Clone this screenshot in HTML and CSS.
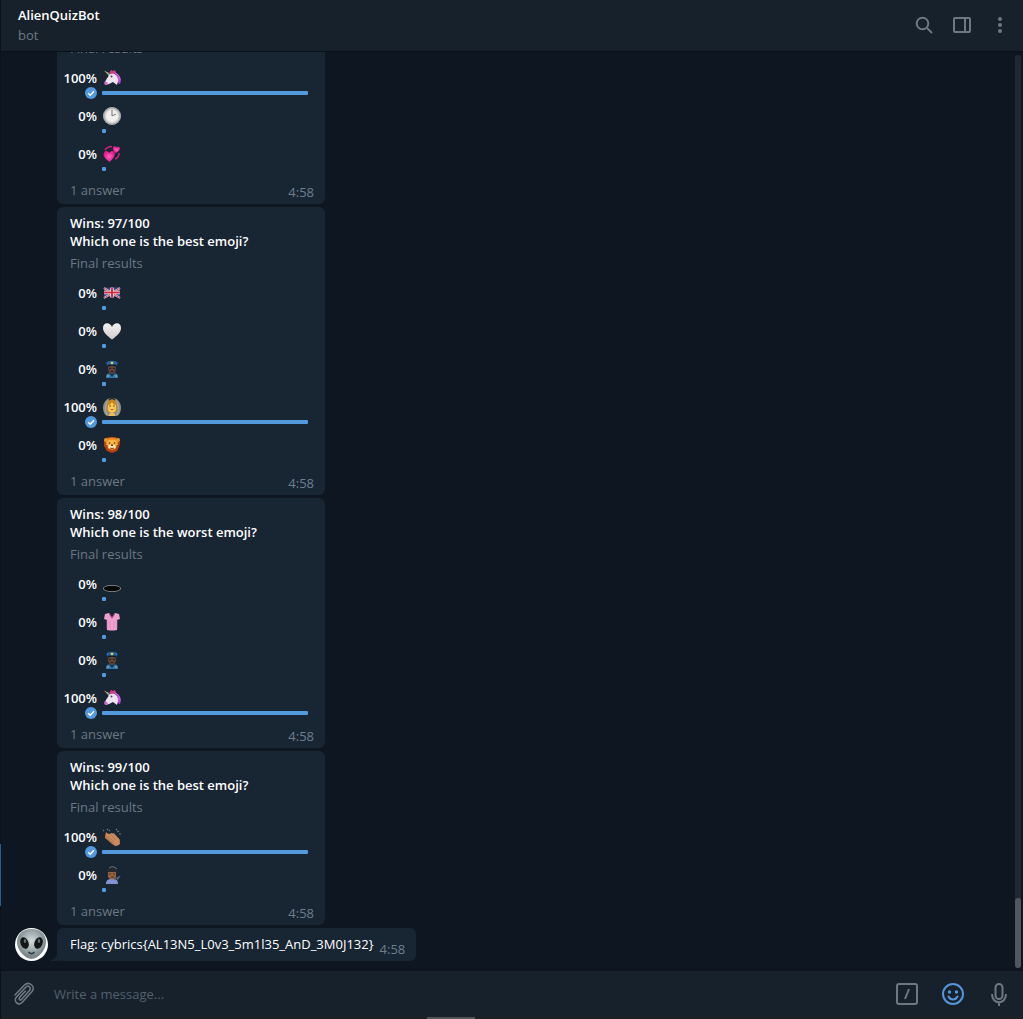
FILE: index.html
```html
<!DOCTYPE html>
<html lang="en">
<head>
<meta charset="utf-8">
<meta name="viewport" content="width=device-width, initial-scale=1">
<title>AlienQuizBot</title>
<link rel="stylesheet" href="styles.css">
</head>
<body>
<svg class="sprite" aria-hidden="true">
  <defs>
    <radialGradient id="silver"><stop offset=".6" stop-color="#f3f1ee"/><stop offset="1" stop-color="#9b9a98"/></radialGradient>
    <linearGradient id="pearl" x2="0" y2="1"><stop offset="0" stop-color="#f4f2f0"/><stop offset="1" stop-color="#cfcdcb"/></linearGradient>
    <radialGradient id="pink"><stop offset="0" stop-color="#ff62bd"/><stop offset="1" stop-color="#e31889"/></radialGradient>
    <radialGradient id="skin" cy=".4"><stop offset="0" stop-color="#d3dadb"/><stop offset=".6" stop-color="#a0adb0"/><stop offset="1" stop-color="#7b878a"/></radialGradient>
  </defs>
  <symbol id="unicorn" viewBox="0 0 18 18">
    <path d="M6 4 8 2l2 1 2-1 1 2c3 1 5 4 5 8l-1 3-3-1-2-4-5-5z" fill="#a63fc4"/>
    <path d="M7 3 8 1l2 1 2-1 1 3-3 1-3 1z" fill="#d03f86"/>
    <path d="M1 1.500 6 4l1 2-1 1z" fill="#b9b558"/><path d="m4 3 3 3-1 1z" fill="#58a9a5"/>
    <path d="M6 6c4-3 9 0 9 5 0 2-1 4-1 5l-4-3-4 2c-2 1-4 0-4-1 0-3 3-5 4-8z" fill="#eee5ef"/>
    <path d="m2 12 3 2-1 2H2l-1-2z" fill="#ca68ce"/><circle cx="8.500" cy="7.500" r="1" fill="#544256"/>
    <path d="M14 7c2 2 2 4 2 6M12 4c3 1 5 4 5 7" fill="none" stroke="#d87cdd" stroke-width=".8"/>
  </symbol>
  <symbol id="clock" viewBox="0 0 18 18"><circle cx="9" cy="9" r="9" fill="url(#silver)"/><circle cx="9" cy="9" r="8.400" fill="none" stroke="#aaa" stroke-width=".7"/><path d="M9 3v6l4-2" fill="none" stroke="#77736f"/></symbol>
  <symbol id="hearts" viewBox="0 0 18 18">
    <path d="M6.500 17C1 13 0 10 1 8c1-3 4-2 5.500 0 1.500-3 5-2 5.500 0 0 3-2 6-5.500 9z" fill="url(#pink)"/>
    <path d="M13 8C10 6 9.500 4 10 2.500c1-2 3-1 3.500 0 .5-1 3-1.500 3.500.5 0 2-1.500 3.500-4 5z" fill="url(#pink)"/>
    <path d="M2 5c2-3 4-3.500 7-3.500M16 8c0 3-1 5-4 6" fill="none" stroke="#d3217f" stroke-width="1.500"/>
  </symbol>
  <symbol id="flag" viewBox="0 0 18 18"><path d="M1 4c4-2 5 1 8 0 3 0 5-2 8 0v9c-4-1-5 1-8 0-3 0-5-1-8 1z" fill="#374486"/><path d="m1 4 16 10M17 4 1 14" stroke="#e9e3e6" stroke-width="2"/><path d="m1 4 16 10M17 4 1 14" stroke="#cd4354"/><path d="M9 3.500v10M1 8.500h16" stroke="#efe7e8" stroke-width="3.500"/><path d="M9 3.500v10M1 8.500h16" stroke="#cf304b" stroke-width="2"/></symbol>
  <symbol id="heart" viewBox="0 0 18 18"><path d="M9 17.500C3 13 0 10 0 6c0-6 7-6 9-1 2-5 9-5 9 1 0 4-3 7-9 11.500z" fill="url(#pearl)"/></symbol>
  <symbol id="police" viewBox="0 0 18 18">
    <path d="M3 18v-2c1-3 3-3 6-3s5 0 6 3v2z" fill="#2f78b5"/><path d="m6 13 3 4 3-4" fill="#15314d"/><path d="M5 5h8v4c0 3-2 5-4 5s-4-2-4-5z" fill="#5e4137"/>
    <path d="M3 3c2-3 10-3 12 0l-2 3H5z" fill="#2467a6"/><path d="M5 4.500h8v2c-3-1-5-1-8 0z" fill="#111b26"/><circle cx="9" cy="3" r="1.300" fill="#f3cb42"/><path d="M6 8.500h2m2 0h2M7.500 11.500h3" stroke="#201818" stroke-width=".8"/><path d="M4 16h2m6 0h2" stroke="#dfb940"/>
  </symbol>
  <symbol id="bride" viewBox="0 0 18 18">
    <path d="M9 0C3 0 0 5 0 10c0 4 2 7 4 8h10c2-1 4-4 4-8 0-5-3-10-9-10z" fill="#8e8f8d"/><path d="M5 3C2 7 2 13 4 17M13 3c3 4 3 10 1 14" stroke="#b1b1ad" fill="none"/>
    <path d="M4 8c0-9 10-9 10 0v6H4z" fill="#c88719"/><path d="M5 7c2 0 3-2 4-3 1 2 2 3 4 3v4c0 5-8 5-8 0z" fill="#f7c951"/><path d="M6 17c0-3 6-3 6 0v1H6z" fill="#efc057"/><path d="M6 2c2-2 4-2 6 0" stroke="#332d1b" stroke-width="1.500" fill="none"/><path d="M6 8h2m2 0h2" stroke="#70461c" stroke-width=".8"/><path d="M7 11q2 2 4 0" fill="#bc4c32"/>
  </symbol>
  <symbol id="lion" viewBox="0 0 18 18">
    <path d="m1 5 2-3 4-1 5 0 4 2 1 4-1 4-2 4-5 2-5-2-3-5z" fill="#b84312"/><path d="M3 4c2-3 10-3 12 0v5H3z" fill="#ed8e21"/><circle cx="3" cy="4" r="2" fill="#e89631"/><circle cx="15" cy="4" r="2" fill="#e89631"/>
    <path d="M4 6c2-3 8-3 10 0l-1 6c-2 2-6 2-8 0z" fill="#f9b842"/><ellipse cx="9" cy="10.500" rx="3.500" ry="2" fill="#ffebb8"/><path d="M8 9h2l-1 1z" stroke="#653015" fill="#653015"/><circle cx="6.500" cy="7" r=".8" fill="#442416"/><circle cx="11.500" cy="7" r=".8" fill="#442416"/><path d="M7 12q2 1 4 0" stroke="#84401c" fill="none"/>
  </symbol>
  <symbol id="hole" viewBox="0 0 18 18"><ellipse cx="9" cy="13.500" rx="9" ry="3.500" fill="#999"/><ellipse cx="9" cy="13.500" rx="8.200" ry="2.700" fill="#050606"/></symbol>
  <symbol id="shirt" viewBox="0 0 18 18"><path d="M6 0 2 1 1 6l3 1v10q5 1 10 0V7l3-1-1-5-4-1-3 5z" fill="#efa0d1"/><path d="M6 0c0 3 2 4 3 6 1-2 3-3 3-6l-3 4z" fill="#b65b98"/><path d="M4 6v10M14 6v10M7 8v7M11 8v7" stroke="#d581b7" stroke-width=".6"/></symbol>
  <symbol id="clap" viewBox="0 0 18 18"><path d="m2 8 1-4 3 3 5-2 6 7-1 5-4 1-3-2-7-6z" fill="#b77950"/><path d="m3 5 3 1 3-1 7 6 1 5-4 2-9-9z" fill="#cb8a60"/><path d="m5 8 6 6M8 7l5 5m-9-1 6 5" stroke="#a06a48" stroke-width=".6"/><path d="M1 3 0 2m4 0 1-1m8 1 1-1m0 3 2-1m0 3h2M6 3l1-1" stroke="#73777a" stroke-width="1.200"/></symbol>
  <symbol id="singer" viewBox="0 0 18 18"><path d="M3 18c0-4 2-5 6-5s6 1 6 5z" fill="#8293d2"/><path d="M5 4h8v7q-4 5-8 0z" fill="#96623f"/><path d="M4 7c-1-8 11-10 11 0l-2-1H5z" fill="#25282d"/><path d="M6 2q4-3 8 1" stroke="#6a727b" fill="none"/><path d="M6 8h2m2 0h2m-4 3h3" stroke="#352119" stroke-width=".8"/><path d="m11 13 5-2m-2 3 3-4" stroke="#596883" stroke-width="1.200"/></symbol>
  <symbol id="tick" viewBox="0 0 12 12"><circle cx="6" cy="6" r="6" fill="#5399dd"/><path d="m3.200 6.200 2 2 3.800-4" fill="none" stroke="#fff" stroke-width="1.400"/></symbol>
</svg>

<div class="window">
  <div class="edge"><span class="edge-mark"></span></div>
  <main class="chat">
    <header class="topbar">
      <div class="peer"><h1 class="peer-name">AlienQuizBot</h1><p class="peer-status">bot</p></div>
      <div class="actions">
        <button class="icon-button" aria-label="Search"><svg viewBox="0 0 22 22"><circle cx="9.500" cy="9.500" r="5.800"/><path d="m14 14 5 5"/></svg></button>
        <button class="icon-button" aria-label="Toggle side panel"><svg viewBox="0 0 22 22"><rect x="3" y="4" width="16" height="14" rx="1"/><path d="M14 4v14"/></svg></button>
        <button class="icon-button" aria-label="More"><svg class="solid" viewBox="0 0 22 22"><circle cx="11" cy="5" r="2"/><circle cx="11" cy="11" r="2"/><circle cx="11" cy="17" r="2"/></svg></button>
      </div>
    </header>

    <section class="history">
      <div class="messages">
        <article class="poll">
          <p class="kind">Final results</p>
          <ul class="options">
            <li class="option"><span class="percent">100%</span><svg class="emoji" role="img" aria-label="Unicorn"><use href="#unicorn"/></svg><svg class="tick"><use href="#tick"/></svg><span class="bar" style="width:100%"></span></li>
            <li class="option"><span class="percent">0%</span><svg class="emoji" role="img" aria-label="Two o'clock"><use href="#clock"/></svg><span class="bar" style="width:0%"></span></li>
            <li class="option"><span class="percent">0%</span><svg class="emoji" role="img" aria-label="Revolving hearts"><use href="#hearts"/></svg><span class="bar" style="width:0%"></span></li>
          </ul>
          <footer class="poll-footer"><span>1 answer</span><time class="time">4:58</time></footer>
        </article>

        <article class="poll">
          <h2 class="question">Wins: 97/100<br>Which one is the best emoji?</h2>
          <p class="kind">Final results</p>
          <ul class="options">
            <li class="option"><span class="percent">0%</span><svg class="emoji" role="img" aria-label="United Kingdom"><use href="#flag"/></svg><span class="bar" style="width:0%"></span></li>
            <li class="option"><span class="percent">0%</span><svg class="emoji" role="img" aria-label="White heart"><use href="#heart"/></svg><span class="bar" style="width:0%"></span></li>
            <li class="option"><span class="percent">0%</span><svg class="emoji" role="img" aria-label="Police officer"><use href="#police"/></svg><span class="bar" style="width:0%"></span></li>
            <li class="option"><span class="percent">100%</span><svg class="emoji" role="img" aria-label="Bride"><use href="#bride"/></svg><svg class="tick"><use href="#tick"/></svg><span class="bar" style="width:100%"></span></li>
            <li class="option"><span class="percent">0%</span><svg class="emoji" role="img" aria-label="Lion"><use href="#lion"/></svg><span class="bar" style="width:0%"></span></li>
          </ul>
          <footer class="poll-footer"><span>1 answer</span><time class="time">4:58</time></footer>
        </article>

        <article class="poll">
          <h2 class="question">Wins: 98/100<br>Which one is the worst emoji?</h2>
          <p class="kind">Final results</p>
          <ul class="options">
            <li class="option"><span class="percent">0%</span><svg class="emoji" role="img" aria-label="Hole"><use href="#hole"/></svg><span class="bar" style="width:0%"></span></li>
            <li class="option"><span class="percent">0%</span><svg class="emoji" role="img" aria-label="Blouse"><use href="#shirt"/></svg><span class="bar" style="width:0%"></span></li>
            <li class="option"><span class="percent">0%</span><svg class="emoji" role="img" aria-label="Police officer"><use href="#police"/></svg><span class="bar" style="width:0%"></span></li>
            <li class="option"><span class="percent">100%</span><svg class="emoji" role="img" aria-label="Unicorn"><use href="#unicorn"/></svg><svg class="tick"><use href="#tick"/></svg><span class="bar" style="width:100%"></span></li>
          </ul>
          <footer class="poll-footer"><span>1 answer</span><time class="time">4:58</time></footer>
        </article>

        <article class="poll">
          <h2 class="question">Wins: 99/100<br>Which one is the best emoji?</h2>
          <p class="kind">Final results</p>
          <ul class="options">
            <li class="option"><span class="percent">100%</span><svg class="emoji" role="img" aria-label="Clapping hands"><use href="#clap"/></svg><svg class="tick"><use href="#tick"/></svg><span class="bar" style="width:100%"></span></li>
            <li class="option"><span class="percent">0%</span><svg class="emoji" role="img" aria-label="Singer"><use href="#singer"/></svg><span class="bar" style="width:0%"></span></li>
          </ul>
          <footer class="poll-footer"><span>1 answer</span><time class="time">4:58</time></footer>
        </article>

        <div class="message-row">
          <svg class="avatar" viewBox="0 0 33 33" role="img" aria-label="AlienQuizBot">
            <circle cx="16.500" cy="16.500" r="16.500" fill="#fff"/>
            <path d="M16.500 1C7 1 2 7 2 14c0 8 8 17 14.500 17S31 22 31 14C31 7 26 1 16.500 1z" fill="url(#skin)"/>
            <ellipse cx="9.500" cy="15" rx="4" ry="6" transform="rotate(-22 9.500 15)" fill="#121616"/><ellipse cx="23.500" cy="15" rx="4" ry="6" transform="rotate(22 23.500 15)" fill="#121616"/>
            <ellipse cx="10" cy="13" rx="1.200" ry="2" fill="#68716f"/><ellipse cx="24" cy="13" rx="1.200" ry="2" fill="#68716f"/>
            <path d="M13.500 24q3 3.500 6 0" fill="none" stroke="#303939" stroke-width="1.500"/>
          </svg>
          <svg class="tail" viewBox="0 0 9 9" aria-hidden="true"><path d="M9 0v9H0v-1c4-1 6-4 6-8z"/></svg>
          <article class="bubble"><p class="text">Flag: cybrics{AL13N5_L0v3_5m1l35_AnD_3M0J132}</p><time class="time">4:58</time></article>
        </div>
      </div>
      <div class="scroll-track"><div class="scroll-thumb"></div></div>
    </section>

    <form class="composer">
      <button type="button" class="icon-button" aria-label="Attach file"><svg class="large thin" viewBox="0 0 24 24"><path d="m2 13 9-9.500c5-5 12 1 8 6l-9.500 10.500c-4 5-9.500-1-6-5l9-9.500c3-3 6 0 4 3l-8 9c-1.500 1-3 0-2-2l6-6.500" stroke-linecap="round"/></svg></button>
      <input class="message-input" type="text" aria-label="Message" placeholder="Write a message...">
      <div class="composer-actions">
        <button type="button" class="icon-button" aria-label="Bot commands"><svg class="large" viewBox="0 0 24 24"><rect x="2" y="2" width="20" height="20" rx="2"/><path d="m10 17 4-10"/></svg></button>
        <button type="button" class="icon-button active" aria-label="Emoji"><svg class="large" viewBox="0 0 24 24"><circle cx="12" cy="12" r="10"/><circle class="eye" cx="8.500" cy="10" r="1.700"/><circle class="eye" cx="15.500" cy="10" r="1.700"/><path d="M7.500 14.500c2 4 7 4 9 0" stroke-linecap="round"/></svg></button>
        <button type="button" class="icon-button" aria-label="Record voice message"><svg class="large" viewBox="0 0 24 24"><rect x="8.500" y="2" width="7" height="15" rx="3.500"/><path d="M5 12c0 11 14 11 14 0M12 20v4"/></svg></button>
      </div>
    </form>
    <div class="grip"><span class="grip-handle"></span></div>
  </main>
</div>
</body>
</html>
```
FILE: styles.css
```css
* { box-sizing: border-box; }
body, h1, h2, p, ul { margin: 0; padding: 0; }
body {
  background: #0e1621;
  color: #fff;
  font: 13px/18px "Open Sans", "Noto Sans", sans-serif;
}
h1, h2 { font-size: 13px; font-weight: 600; }
.sprite { position: absolute; width: 0; height: 0; }

.window { display: flex; height: 100vh; }
.edge { display: flex; flex-direction: column; justify-content: flex-end; width: 1px; padding-bottom: 113px; background: #0b121b; }
.edge-mark { height: 62px; background: #285d91; }
.chat { display: flex; flex: 1; flex-direction: column; min-width: 0; }

.topbar {
  display: flex;
  flex: none;
  align-items: center;
  justify-content: space-between;
  height: 51px;
  padding: 0 12px 1px 17px;
  background: #17212b;
}
.peer-name, .peer-status { line-height: 20px; }
.peer-status { color: #6c7883; }
.actions { display: flex; gap: 16px; }
.icon-button { display: block; flex: none; padding: 0; border: 0; background: none; color: #6c7883; }
.icon-button svg { display: block; width: 22px; height: 22px; fill: none; stroke: currentColor; stroke-width: 2; }
.icon-button svg.large { width: 24px; height: 24px; }
.icon-button svg.thin { stroke-width: 1.6; }
.icon-button svg.solid { fill: currentColor; stroke: none; }
.icon-button.active { color: #5595da; }
.eye { fill: currentColor; stroke: none; }

.history { display: flex; flex: 1; min-height: 0; border-top: 1px solid #0b121a; }
.messages {
  display: flex;
  flex: 1;
  flex-direction: column;
  align-items: flex-start;
  justify-content: flex-end;
  gap: 3px;
  min-width: 0;
  padding: 0 14px 9px;
  overflow: hidden;
}
.poll, .bubble { border-radius: 6px; background: #182533; }
.poll { flex: none; width: 268px; margin-left: 42px; padding-top: 7px; }
.question, .kind { padding: 0 13px; }
.kind { margin-top: 4px; color: #6c7883; }
.options { margin-top: 8px; list-style: none; }
.option {
  display: grid;
  grid-template-columns: 40px 1fr;
  grid-template-rows: 18px 12px;
  column-gap: 5px;
  padding: 4px 17px 4px 0;
}
.percent { font-weight: 600; text-align: right; }
.emoji { width: 18px; height: 18px; margin-left: 1px; }
.tick { grid-area: 2 / 1; justify-self: end; width: 12px; height: 12px; }
.bar { grid-area: 2 / 2; align-self: center; min-width: 4px; height: 4px; border-radius: 1px; background: #5399dd; }
.poll-footer { display: flex; justify-content: space-between; padding: 2px 11px 1px 13px; color: #6c7883; }
.time { color: #6d7f8f; line-height: 22px; }

.message-row { display: flex; flex: none; align-items: flex-end; }
.avatar { width: 33px; height: 33px; }
.tail { width: 9px; height: 9px; margin: 0 -3px 0 3px; fill: #182533; }
.bubble { display: flex; align-items: flex-end; gap: 6px; padding: 0 11px 0 13px; }
.bubble .time { line-height: 24px; }
.text { padding: 7px 0 8px; }

.scroll-track { display: flex; flex-direction: column; justify-content: flex-end; width: 6px; margin: 3px 2px 2px; border-radius: 3px; background: #202933; }
.scroll-thumb { height: 70px; border-radius: 3px; background: #50575f; }

.composer {
  display: flex;
  flex: none;
  align-items: center;
  height: 47px;
  padding: 0 12px;
  border-top: 1px solid #0b121a;
  background: #17212b;
}
.message-input { flex: 1; min-width: 0; margin: 0 16px 0 17px; padding: 0; border: 0; outline: 0; background: none; color: #fff; font: inherit; }
.message-input::placeholder { color: #52606d; opacity: 1; }
.composer-actions { display: flex; gap: 22px; }
.grip { display: flex; flex: none; justify-content: center; height: 2px; padding-right: 122px; background: #211f20; }
.grip-handle { width: 48px; background: #535354; }
```
